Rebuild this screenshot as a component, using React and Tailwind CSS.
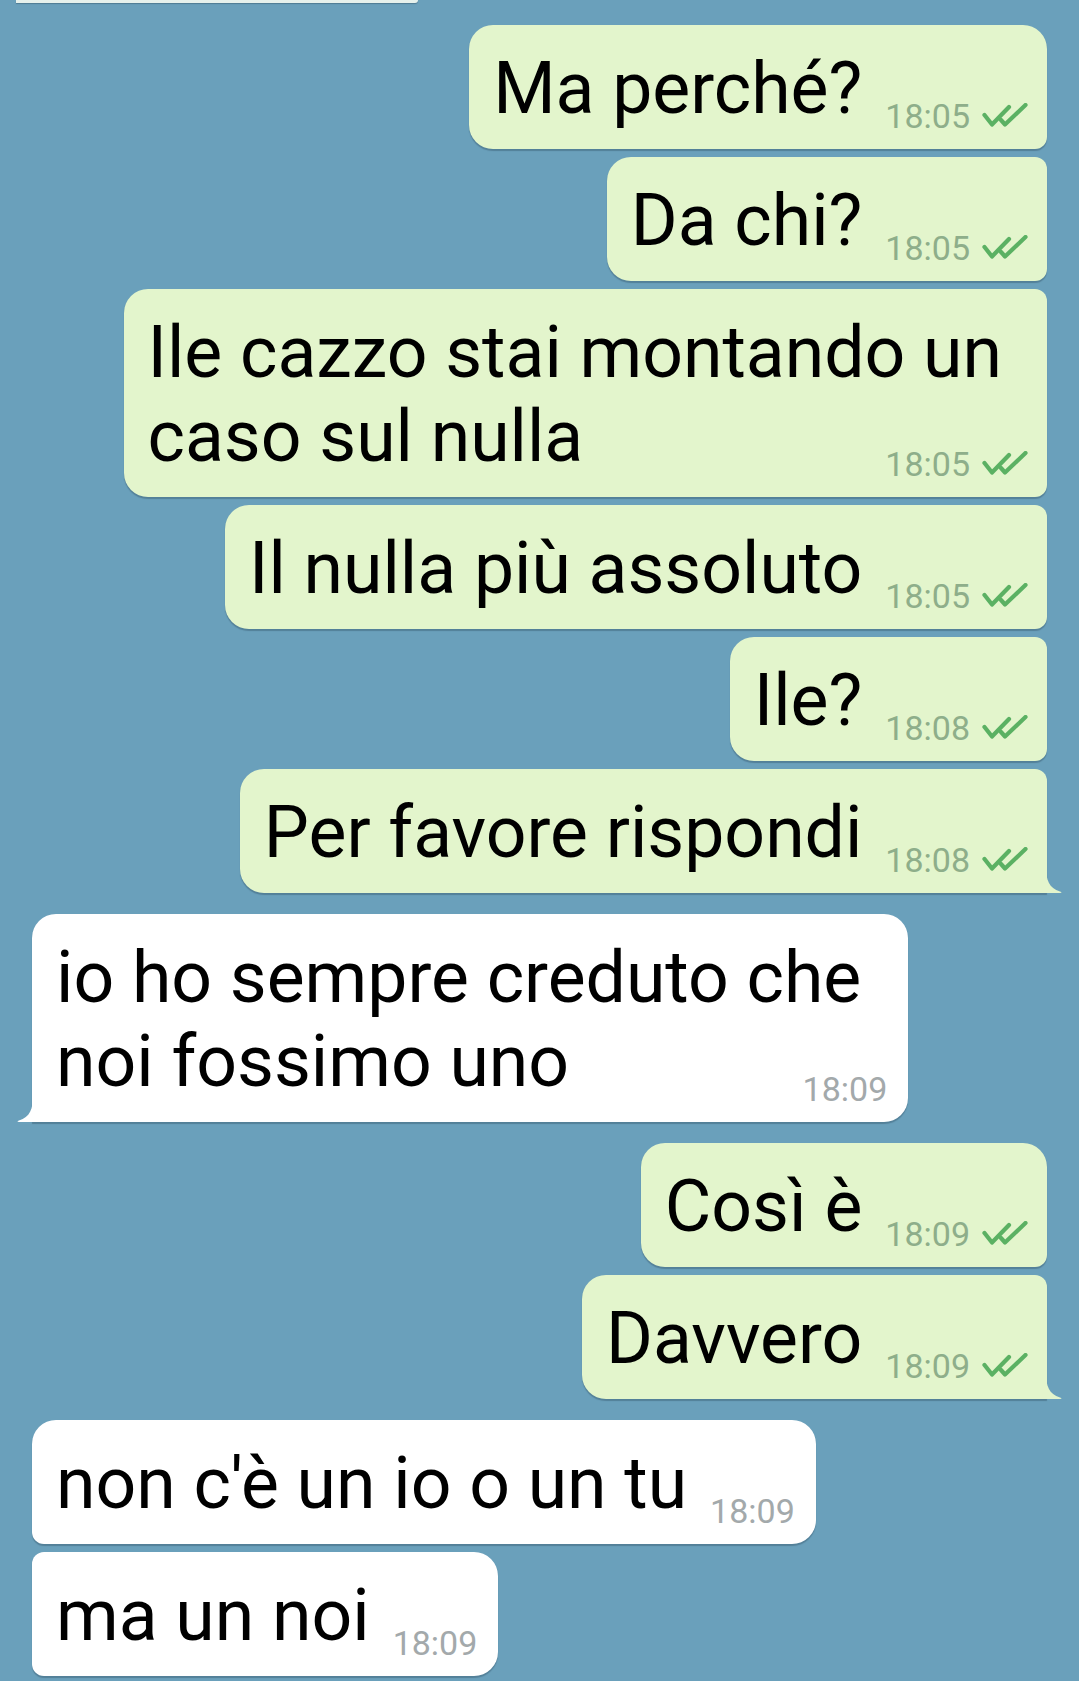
import React from 'react';

const OUT_BG = '#e3f5cc';

const messages = [
  { out: true, lines: ['Ma perché?'], time: '18:05', pos: 'first' },
  { out: true, lines: ['Da chi?'], time: '18:05', pos: 'mid' },
  { out: true, lines: ['Ile cazzo stai montando un', 'caso sul nulla'], time: '18:05', pos: 'mid' },
  { out: true, lines: ['Il nulla più assoluto'], time: '18:05', pos: 'mid' },
  { out: true, lines: ['Ile?'], time: '18:08', pos: 'mid' },
  { out: true, lines: ['Per favore rispondi'], time: '18:08', pos: 'last' },
  { out: false, lines: ['io ho sempre creduto che', 'noi fossimo uno'], time: '18:09', pos: 'single' },
  { out: true, lines: ['Così è'], time: '18:09', pos: 'first' },
  { out: true, lines: ['Davvero'], time: '18:09', pos: 'last' },
  { out: false, lines: ["non c'è un io o un tu"], time: '18:09', pos: 'first' },
  { out: false, lines: ['ma un noi'], time: '18:09', pos: 'mid' },
];

function Checks() {
  return (
    <svg width="46" height="25" viewBox="0 0 46 25" fill="none" stroke="#5bb163" strokeWidth="4.2" strokeLinecap="round" strokeLinejoin="round">
      <path d="M2.5 12 L10 21.5 L27 4" />
      <path d="M19 17 L23 21.5 L43.5 2" />
    </svg>
  );
}

function Tail({ out }) {
  // little hook at the bottom corner of the last bubble in a group
  return out ? (
    <svg className="absolute right-[-15px] bottom-0 w-[16px] h-[26px]" viewBox="0 0 16 26">
      <path d="M0 0 C0 13 3 21 14 24.5 C16 25 16 26 14 26 L0 26 Z" fill={OUT_BG} />
    </svg>
  ) : (
    <svg className="absolute left-[-15px] bottom-0 w-[16px] h-[26px]" viewBox="0 0 16 26">
      <path d="M16 0 C16 13 13 21 2 24.5 C0 25 0 26 2 26 L16 26 Z" fill="#ffffff" />
    </svg>
  );
}

function Bubble({ msg, first }) {
  const { out, lines, time, pos } = msg;
  const head = lines.slice(0, -1);
  const last = lines[lines.length - 1];
  const gap = first ? 'mt-[22px]' : pos === 'first' || pos === 'single' ? 'mt-[21px]' : 'mt-[8px]';

  let corners;
  if (out) {
    corners =
      pos === 'first'
        ? 'rounded-[24px] rounded-br-[12px]'
        : pos === 'mid'
        ? 'rounded-[24px] rounded-tr-[12px] rounded-br-[12px]'
        : 'rounded-[24px] rounded-tr-[12px] rounded-br-none';
  } else {
    corners =
      pos === 'single'
        ? 'rounded-[24px] rounded-bl-none'
        : pos === 'first'
        ? 'rounded-[24px] rounded-bl-[12px]'
        : 'rounded-[24px] rounded-tl-[12px] rounded-bl-[12px]';
  }
  const hasTail = pos === 'last' || pos === 'single';

  return (
    <div
      className={`relative ${gap} ${out ? 'self-end bg-[#e3f5cc] pr-[19px]' : 'self-start bg-white pr-[21px]'} ${corners} pl-[24px] pt-[22px] pb-[18px] shadow-[0_1.5px_1px_rgba(40,70,90,0.35)]`}
    >
      {head.map((l) => (
        <div key={l} className="whitespace-nowrap leading-[84px] pr-[26px]">{l}</div>
      ))}
      <div className="flex items-end">
        <span className="whitespace-nowrap leading-[84px]">{last}</span>
        <span className="ml-auto pl-[23px] flex items-baseline gap-[12px] text-[34px] leading-[29px]">
          <span className={out ? 'text-[#8eae8a]' : 'text-[#a3a9ab]'}>{time}</span>
          {out && <Checks />}
        </span>
      </div>
      {hasTail && <Tail out={out} />}
    </div>
  );
}

export default function App() {
  return (
    <div className="w-[1079px] h-[1681px] overflow-hidden bg-[#6aa0bb] font-['Roboto',sans-serif] text-[71.5px] text-black">
      <div className="flex flex-col px-[32px]">
        {/* bottom edge of the previous message, scrolled off */}
        <div className="ml-[-16px] w-[402px] h-[3px] bg-[#e6f1ec] rounded-br-[3px] shadow-[0_1px_1px_rgba(40,70,90,0.4)]"></div>
        {messages.map((m, i) => (
          <Bubble key={i} msg={m} first={i === 0} />
        ))}
      </div>
    </div>
  );
}
